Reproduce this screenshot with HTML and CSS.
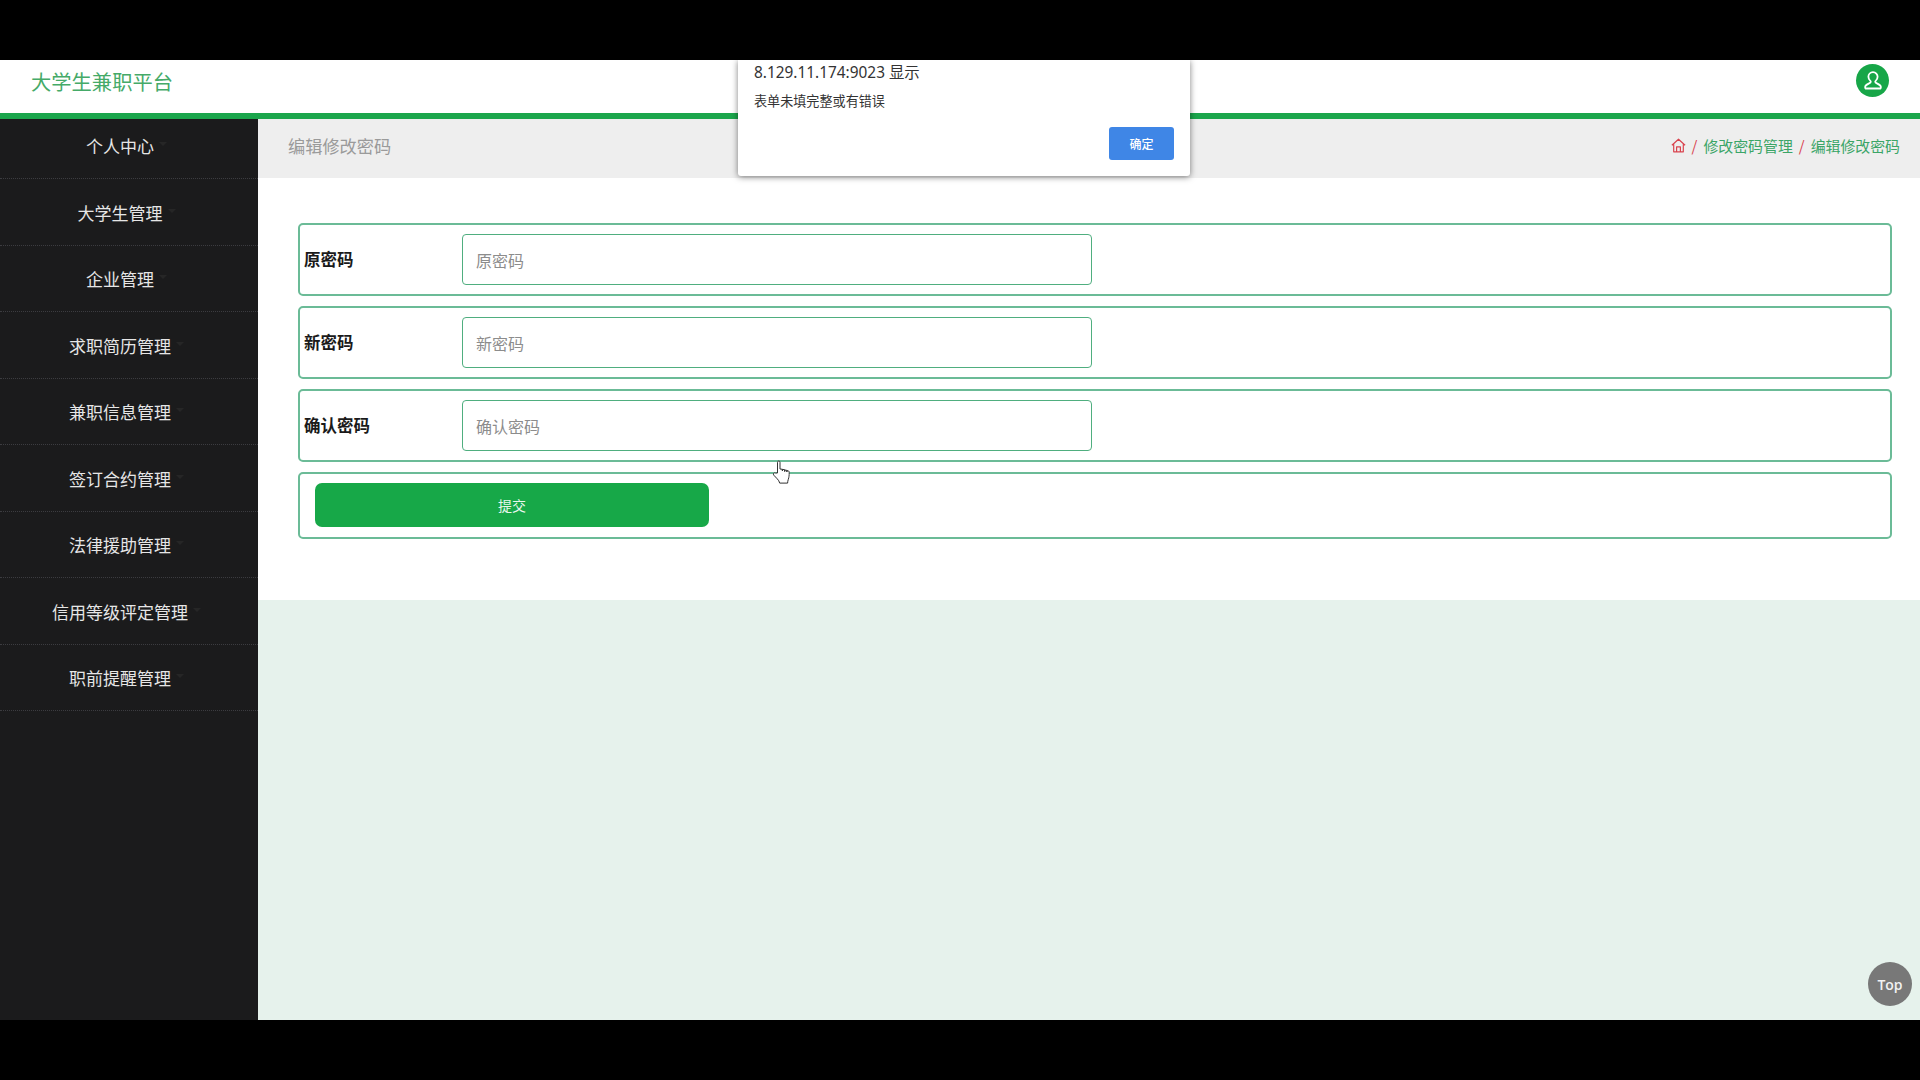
FILE: index.html
```html
<!DOCTYPE html>
<html lang="zh-CN">
<head>
<meta charset="utf-8">
<title>大学生兼职平台</title>
<link rel="stylesheet" href="styles.css">
</head>
<body>
<div class="letterbox"></div>
<div class="app">
  <header class="topbar">
    <div class="brand">大学生兼职平台</div>
    <div class="avatar">
      <svg width="22" height="22" viewBox="0 0 22 22" fill="none" stroke="#fff" stroke-width="1.8" stroke-linejoin="round" stroke-linecap="round">
        <path d="M11 2.2c-2.7 0-4.6 2-4.6 4.6 0 1.9.9 3.3 2.1 4.3.3.3.3 1-.1 1.4-.9.8-3.2 1.7-4.6 3-.8.8-.9 2.4-.2 3h14.8c.7-.6.6-2.2-.2-3-1.4-1.3-3.7-2.2-4.6-3-.4-.4-.4-1.100-.1-1.400 1.200-1 2.100-2.400 2.100-4.300 0-2.600-1.900-4.600-4.600-4.600z"/>
      </svg>
    </div>
  </header>
  <div class="main">
    <nav class="sidebar">
      <ul class="menu">
        <li class="menu-item"><span class="menu-label">个人中心</span></li>
        <li class="menu-item"><span class="menu-label">大学生管理</span></li>
        <li class="menu-item"><span class="menu-label">企业管理</span></li>
        <li class="menu-item"><span class="menu-label">求职简历管理</span></li>
        <li class="menu-item"><span class="menu-label">兼职信息管理</span></li>
        <li class="menu-item"><span class="menu-label">签订合约管理</span></li>
        <li class="menu-item"><span class="menu-label">法律援助管理</span></li>
        <li class="menu-item"><span class="menu-label">信用等级评定管理</span></li>
        <li class="menu-item"><span class="menu-label">职前提醒管理</span></li>
      </ul>
    </nav>
    <section class="content">
      <div class="crumbbar">
        <h1 class="page-title">编辑修改密码</h1>
        <div class="crumbs">
          <svg class="home" width="15" height="15" viewBox="0 0 15 15" fill="none" stroke="#d9434e" stroke-width="1.2" stroke-linejoin="round">
            <path d="M.9 7.300 7.500 1.200l6.600 6.100M2.700 6.200v7.600h9.600V6.200M5.600 13.800V8.800h3.800v5"/>
          </svg>
          <span class="sep">/</span><span class="crumb">修改密码管理</span><span class="sep">/</span><span class="crumb">编辑修改密码</span>
        </div>
      </div>
      <form class="form">
        <div class="row"><label class="row-label">原密码</label><input class="field" placeholder="原密码"></div>
        <div class="row"><label class="row-label">新密码</label><input class="field" placeholder="新密码"></div>
        <div class="row"><label class="row-label">确认密码</label><input class="field" placeholder="确认密码"></div>
        <div class="row row-submit"><button type="button" class="submit">提交</button></div>
      </form>
      <div class="filler"></div>
    </section>
  </div>
</div>
<div class="letterbox"></div>

<div class="dialog">
  <div class="dialog-origin">8.129.11.174:9023 显示</div>
  <div class="dialog-msg">表单未填完整或有错误</div>
  <div class="dialog-actions"><button type="button" class="dialog-ok">确定</button></div>
</div>
<div class="to-top">Top</div>
<svg class="cursor" width="20" height="25" viewBox="0 0 20 25" stroke="#333" stroke-width="1" stroke-linejoin="round">
  <path fill="#fff" d="M5.500 13V2.300c0-1.700 2.500-1.700 2.500 0V9l2.400.3V11 9.400l2.300.3v1.900-1.600l2.200.4V12v-1.300c1.600-.3 2.300.5 2.300 1.800 0 3-.2 4.800-.9 6.800-.4 1.400-.7 2.600-.7 3.800H7.700c-.4-1.800-1.300-3-2.500-4.300L1.800 15.200c-1.200-1.400.4-3.100 1.800-2.100z"/>
</svg>
</body>
</html>
```

FILE: styles.css
```css
* { box-sizing: border-box; }
html, body { margin: 0; padding: 0; }
body {
  width: 1920px;
  height: 1080px;
  overflow: hidden;
  background: #000;
  display: flex;
  flex-direction: column;
  font-family: "Noto Sans CJK SC", "Noto Sans", sans-serif;
}
.letterbox { height: 60px; flex: none; background: #000; }
.app { height: 960px; flex: none; display: flex; flex-direction: column; }

.topbar {
  height: 59px;
  flex: none;
  background: #fff;
  border-bottom: 6px solid #1ba64c;
  display: flex;
  align-items: center;
  justify-content: space-between;
  padding: 0 31px 0 31px;
}
.brand { font-size: 20.300px; line-height: 28px; color: #45aa68; margin-top: -11px; }
.avatar {
  width: 33px;
  height: 33px;
  border-radius: 50%;
  background: #17a648;
  display: flex;
  align-items: center;
  justify-content: center;
  margin-top: -12px;
}

.main { flex: 1; display: flex; min-height: 0; }
.sidebar { width: 258px; flex: none; background: #1b1b1c; overflow: hidden; }
.menu { list-style: none; margin: -6.5px 0 0; padding: 0 18px 0 0; position: relative; }
.menu-item {
  height: 66.5px;
  display: flex;
  align-items: center;
  justify-content: center;
  position: relative;
  font-size: 17px;
  color: #e6e6e6;
}
.menu-item::before {
  content: "";
  position: absolute;
  left: 0;
  width: 258px;
  bottom: 0;
  border-bottom: 1px dotted #3c3c40;
}
.menu-label { position: relative; }
.menu-label::after {
  content: "";
  position: absolute;
  left: 100%;
  top: 9px;
  margin-left: 5px;
  border: 4px solid transparent;
  border-top-color: #262626;
}

.content { flex: 1; display: flex; flex-direction: column; min-width: 0; background: #fff; }
.crumbbar {
  height: 59px;
  flex: none;
  background: #eeeeee;
  display: flex;
  align-items: center;
  justify-content: space-between;
  padding: 0 20px 7px 30px;
}
.page-title { margin: 0; font-size: 17.200px; font-weight: 400; color: #9a9a9a; }
.crumbs { display: flex; align-items: center; font-size: 14.900px; color: #3ba567; }
.home { margin-right: 6px; }
.sep { color: #d9434e; margin-right: 6px; }
.crumb { margin-right: 6px; }
.crumb:last-child { margin-right: 0; }

.form {
  height: 422px;
  flex: none;
  background: #fff;
  padding: 45px 28px 0 40px;
  display: flex;
  flex-direction: column;
  gap: 10px;
}
.row {
  height: 73px;
  flex: none;
  border: 2px solid #6bbb97;
  border-radius: 5px;
  display: flex;
  align-items: center;
  padding-left: 4px;
}
.row-label { width: 158px; flex: none; font-size: 16.500px; font-weight: 700; color: #1a1a1a; margin-top: -2px; }
.field {
  width: 630px;
  height: 51px;
  border: 1px solid #4fae7f;
  border-radius: 4px;
  padding: 0 13px;
  font-family: inherit;
  font-size: 16px;
  outline: none;
  background: #fff;
}
.field::placeholder { color: #8c8c8c; opacity: 1; }
.row-submit { height: 67px; padding-left: 15px; padding-bottom: 2px; }
.submit {
  width: 394px;
  height: 44px;
  background: #17a848;
  border: 0;
  border-radius: 7px;
  color: #e9f7ee;
  font-family: inherit;
  font-size: 14px;
}
.filler { flex: 1; background: #e6f2ec; }

.dialog {
  position: absolute;
  left: 738px;
  top: 60px;
  width: 452px;
  height: 116px;
  background: #fff;
  border-radius: 0 0 3px 3px;
  box-shadow: 0 1px 6px rgba(0, 0, 0, .5);
  padding: 1px 16px 0;
  clip-path: inset(0 -12px -12px -12px);
  color: #333;
}
.dialog-origin { font-family: "Noto Sans", "Noto Sans CJK SC", sans-serif; font-size: 15.400px; line-height: 24px; }
.dialog-msg { font-size: 13.100px; line-height: 18px; margin-top: 7px; }
.dialog-actions { display: flex; justify-content: flex-end; margin-top: 17px; }
.dialog-ok {
  width: 65px;
  height: 33px;
  background: #3f86e6;
  border: 0;
  border-radius: 3px;
  color: #fff;
  font-family: inherit;
  font-size: 12px;
  font-weight: 500;
  padding: 0;
}

.to-top {
  position: absolute;
  left: 1868px;
  top: 962px;
  width: 44px;
  height: 44px;
  border-radius: 50%;
  background: #787878;
  color: #f2f2f2;
  font-family: "Open Sans", sans-serif;
  font-size: 14px;
  font-weight: 600;
  display: flex;
  align-items: center;
  justify-content: center;
}
.cursor { position: absolute; left: 772px; top: 460px; }
```
